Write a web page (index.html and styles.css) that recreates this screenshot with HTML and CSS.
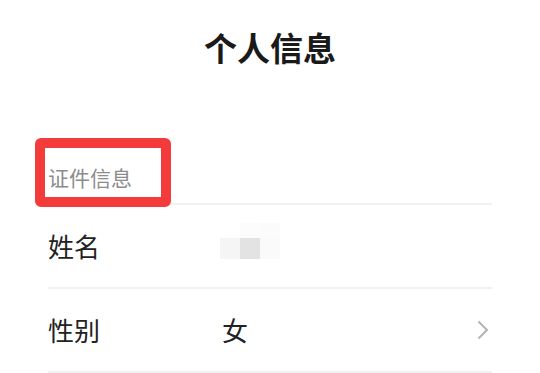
FILE: index.html
```html
<!DOCTYPE html>
<html lang="zh-CN">
<head>
    <meta charset="UTF-8">
    <meta name="viewport" content="width=device-width, initial-scale=1.0">
    <title>个人信息</title>
    <link rel="stylesheet" href="styles.css">
</head>
<body>

<!-- Header -->
<h1 class="page-title">个人信息</h1>

<!-- Info List -->
<section class="info-list">
    <div class="section-head">
        <span class="section-label">证件信息</span>
        <div class="mark-box"></div>
    </div>

    <div class="info-row">
        <div class="info-label">姓名</div>
        <div class="mosaic">
            <span></span><span class="m1"></span><span class="m2"></span>
            <span class="m3"></span><span class="m4"></span><span class="m5"></span>
        </div>
    </div>

    <div class="info-row">
        <div class="info-label">性别</div>
        <div class="info-value">女</div>
        <svg class="arrow" width="12" height="20" viewBox="0 0 12 20">
            <polyline points="1.5,1.5 10,10 1.5,18.5" fill="none" stroke="#b3b3b3" stroke-width="2"/>
        </svg>
    </div>
</section>

</body>
</html>
```

FILE: styles.css
```css
/* Basic Styling */
body {
    font-family: "Noto Sans CJK SC", "Noto Sans", sans-serif;
    background-color: #fff;
    margin: 0;
    padding: 0;
    color: #222;
}
.page-title {
    margin: 0;
    padding-top: 24px;
    font-size: 33px;
    line-height: 47px;
    font-weight: 700;
    text-align: center;
    color: #1a1a1a;
}
.info-list {
    margin: 0 48px;
}
.section-head {
    position: relative;
    padding-top: 91px;
    padding-bottom: 11px;
    border-bottom: 2px solid #f1f1f1;
}
.section-label {
    display: block;
    font-size: 21px;
    line-height: 30px;
    color: #8c8c8c;
}
.mark-box {
    position: absolute;
    left: -13px;
    top: 67px;
    width: 116px;
    height: 49px;
    border: 10px solid #f43b3b;
    border-radius: 6px;
}
.info-row {
    display: flex;
    align-items: center;
    height: 82px;
    border-bottom: 2px solid #f1f1f1;
}
.info-label {
    width: 174px;
    font-size: 26px;
    line-height: 36px;
}
.info-value {
    flex: 1;
    font-size: 26px;
    line-height: 36px;
}
.mosaic {
    display: grid;
    grid-template-columns: 20px 20px 20px;
    grid-template-rows: 15px 21px;
    margin-left: -2px;
    margin-top: -10px;
}
.mosaic .m1 { background: #fcfcfc; }
.mosaic .m2 { background: #fbfbfb; }
.mosaic .m3 { background: #f5f5f5; }
.mosaic .m4 { background: #e3e3e3; }
.mosaic .m5 { background: #fafafa; }
.arrow {
    margin-right: 3px;
}
```
